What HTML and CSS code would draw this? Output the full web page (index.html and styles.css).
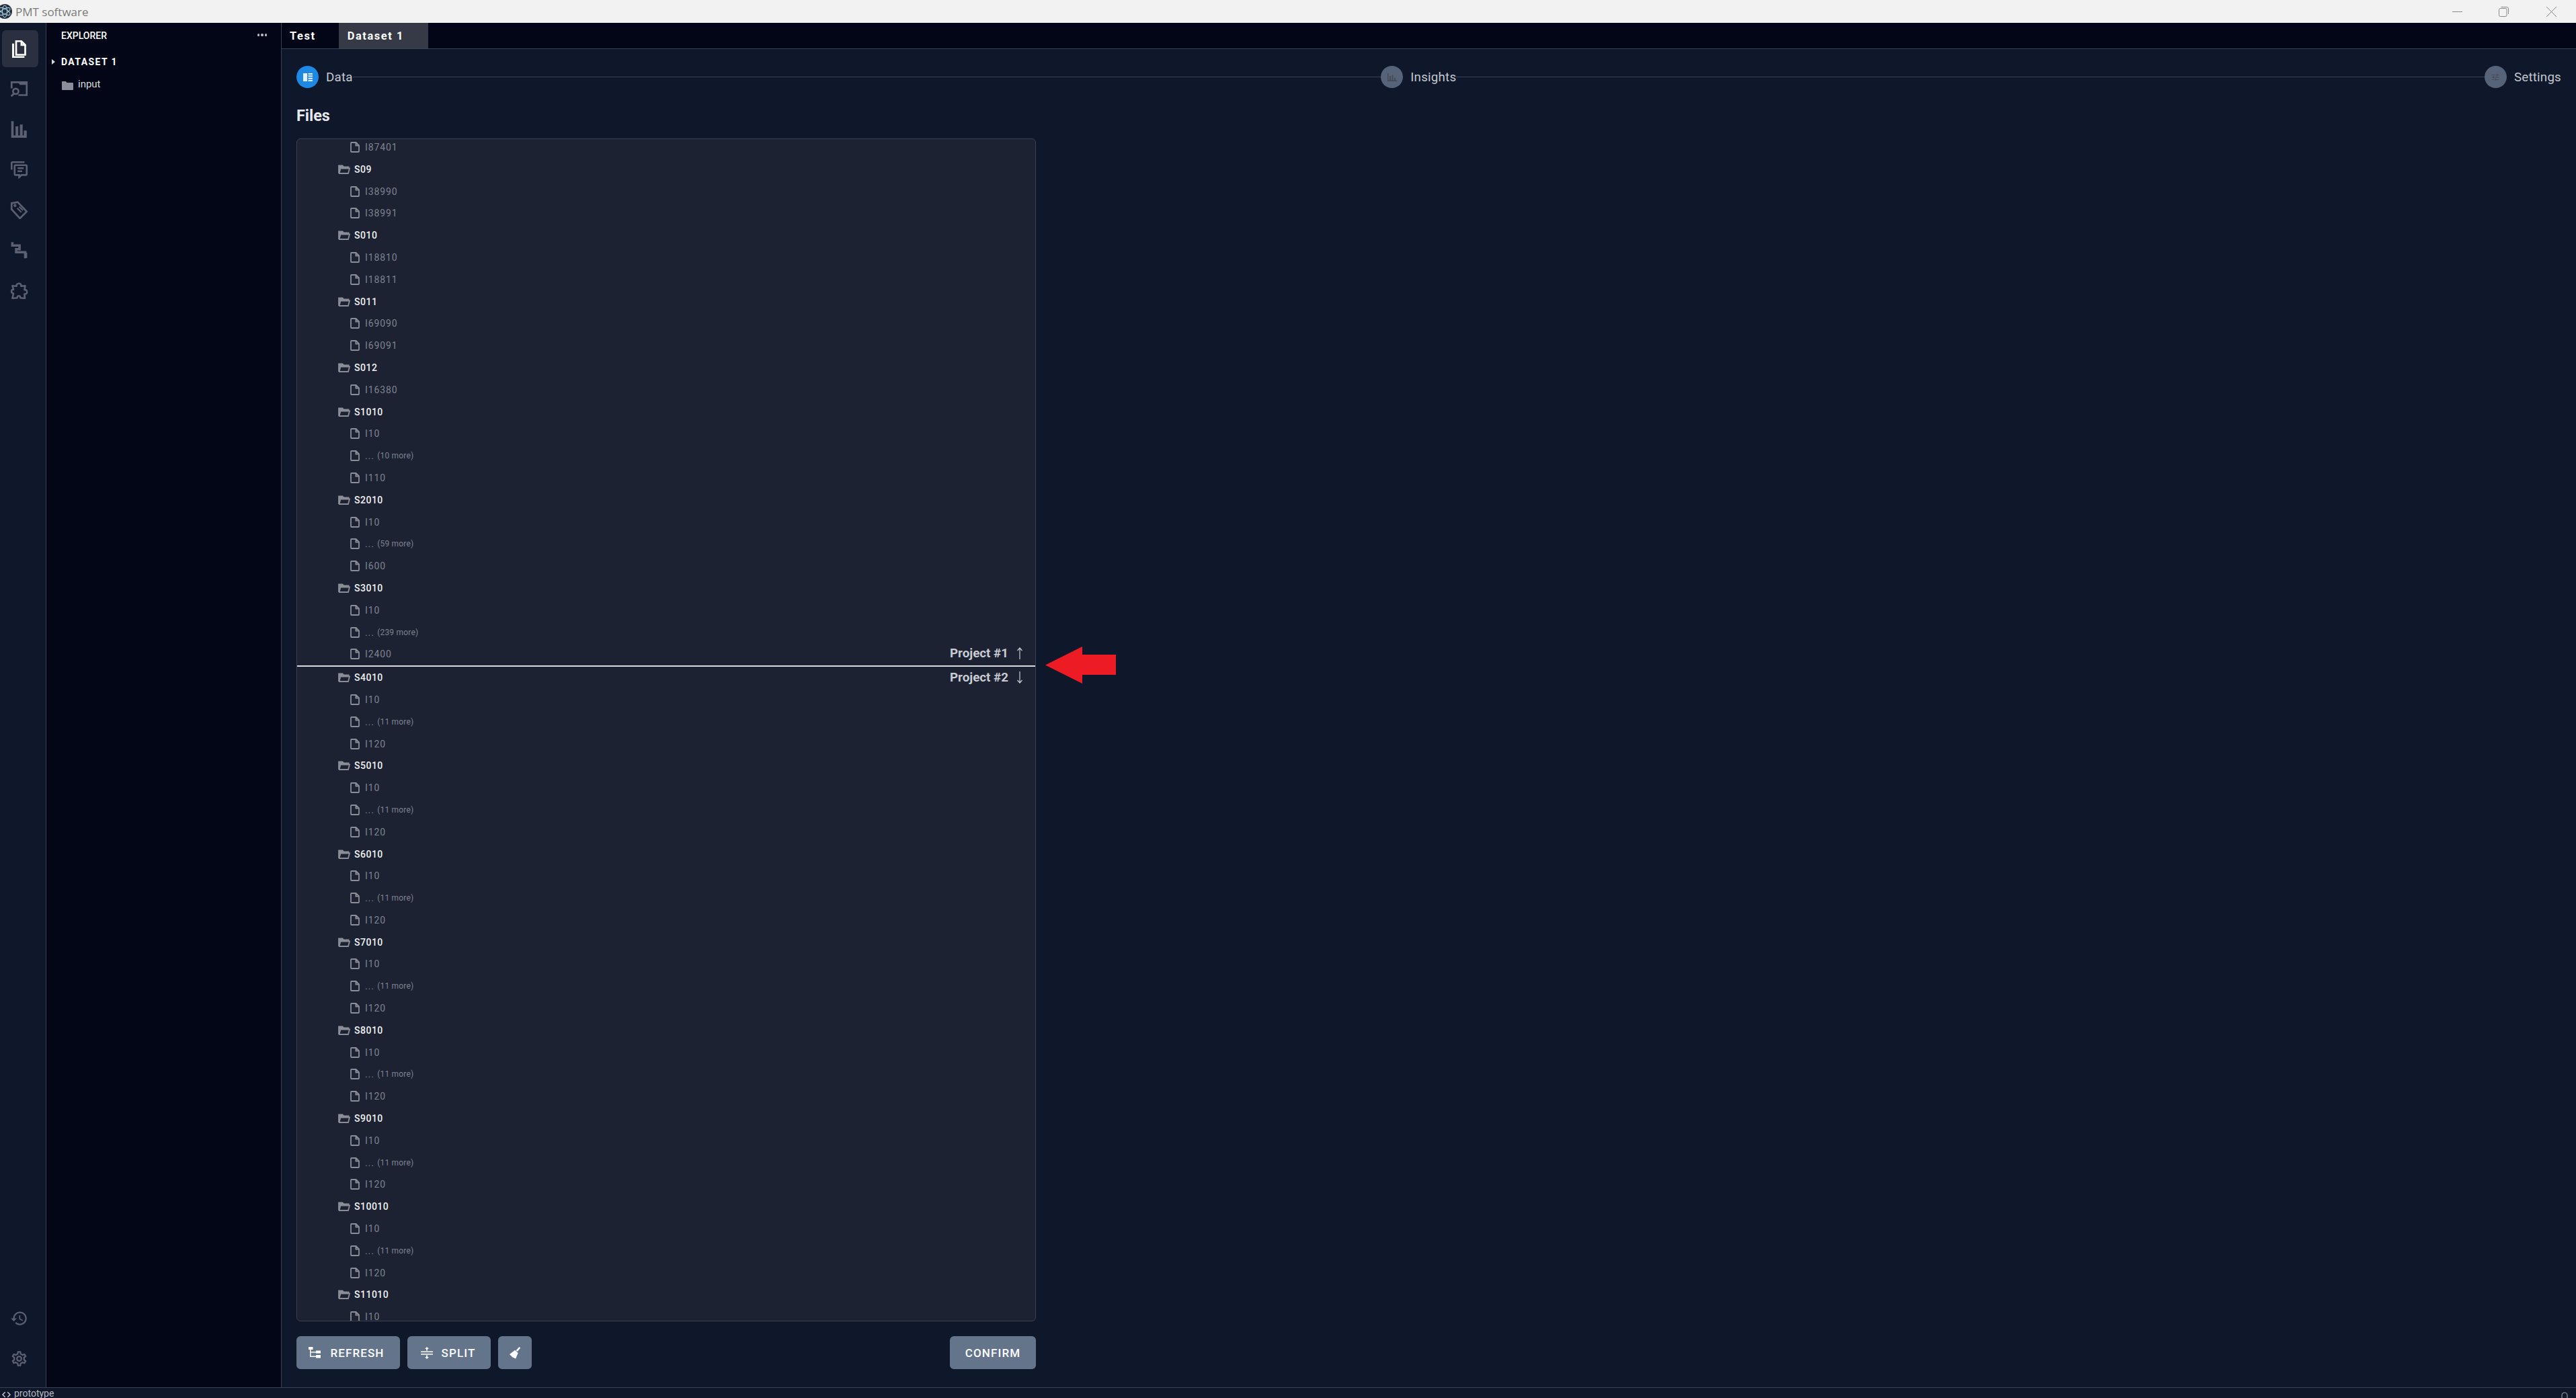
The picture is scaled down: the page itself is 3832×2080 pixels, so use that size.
FILE: index.html
```html
<!DOCTYPE html>
<html lang="en">
<head>
    <meta charset="UTF-8">
    <meta name="viewport" content="width=device-width, initial-scale=1.0">
    <title>PMT software</title>
    <link rel="stylesheet" href="styles.css">
</head>
<body>
    <svg class="sprites" aria-hidden="true">
        <symbol id="i-file" viewBox="0 0 14 16"><path d="M1 2a1 1 0 0 1 1-1h6.6L13 5.4V14a1 1 0 0 1-1 1H2a1 1 0 0 1-1-1z M8.4 1v4.6H13" fill="none" stroke="currentColor" stroke-width="1.8"/></symbol>
        <symbol id="i-folder" viewBox="0 0 18 14"><path d="M1 13V1.5h5.5l1.6 1.8h7.4v2M1 13h14l2-7.5H3.5L1.5 13" fill="none" stroke="currentColor" stroke-width="1.8"/><path d="M1 1h5.5l1.6 2H15v2H3L1 11z" fill="currentColor"/></symbol>
    </svg>

    <div class="titlebar">
        <svg class="app-logo" viewBox="0 0 22 22"><circle cx="11" cy="11" r="11" fill="#2b3040"/><g fill="none" stroke="#9fd8e8" stroke-width="1"><ellipse cx="11" cy="11" rx="9" ry="3.6" transform="rotate(30 11 11)"/><ellipse cx="11" cy="11" rx="9" ry="3.6" transform="rotate(90 11 11)"/><ellipse cx="11" cy="11" rx="9" ry="3.6" transform="rotate(150 11 11)"/></g></svg>
        <span class="app-name">PMT software</span>
        <div class="win-controls">
            <svg viewBox="0 0 15 15"><path d="M0 7.5h15" stroke="#8a8a8a" stroke-width="1"/></svg>
            <svg viewBox="0 0 15 15"><rect x=".5" y="2.5" width="11.5" height="12" rx="2" fill="none" stroke="#8a8a8a"/><path d="M3.5 .5h8.5a2.5 2.5 0 0 1 2.5 2.5v8" fill="none" stroke="#8a8a8a"/></svg>
            <svg viewBox="0 0 15 15"><path d="M0 0l15 15M15 0L0 15" stroke="#8a8a8a" stroke-width="1"/></svg>
        </div>
    </div>

    <div class="workspace">
        <nav class="rail">
            <div class="rail-top">
                <div class="rail-item active">
                    <svg viewBox="0 0 24 24" fill="none" stroke="currentColor" stroke-width="2.4"><path d="M8 2h7l5 5v13H8z"/><path d="M15 2v5h5" /><path d="M4 5v18h15" stroke-width="2.6"/></svg>
                </div>
                <div class="rail-item">
                    <svg viewBox="0 0 24 24" fill="none" stroke="currentColor" stroke-width="2.4"><path d="M2 11V3h20v17H11"/><path d="M10 2.5h12v4H13z" fill="currentColor" stroke="none"/><circle cx="7.5" cy="15" r="3.6"/><path d="M5 18l-3.5 3.5"/></svg>
                </div>
                <div class="rail-item">
                    <svg viewBox="0 0 24 24" fill="currentColor"><path d="M1.5 1h3.2v19h2.5V8h3.6v12h2.2V5.5h3.6V20h1.6v-6.5H22V23H1.5z"/></svg>
                </div>
                <div class="rail-item">
                    <svg viewBox="0 0 24 24" fill="none" stroke="currentColor" stroke-width="2.3"><path d="M2 12V3a1 1 0 0 1 1-1h16"/><path d="M6 7a1 1 0 0 1 1-1h14a1 1 0 0 1 1 1v11a1 1 0 0 1-1 1h-6l-3 3v-3H7a1 1 0 0 1-1-1z"/><path d="M10 10h8M10 14h6"/></svg>
                </div>
                <div class="rail-item">
                    <svg viewBox="0 0 24 24" fill="none" stroke="currentColor" stroke-width="2.3"><path d="M2 3l8-1.5L22 14l-9 9L2 11z"/><path d="M9.5 9.5l5.5 5.5M12 7.5l5 5" stroke-width="1.8"/><circle cx="6.5" cy="6" r=".8"/></svg>
                </div>
                <div class="rail-item">
                    <svg viewBox="0 0 24 24" fill="none" stroke="currentColor" stroke-width="3.2"><path d="M3 1v4.5h9.5v5H8v4h12v8M21 15v7"/></svg>
                </div>
                <div class="rail-item">
                    <svg viewBox="0 0 24 24" fill="none" stroke="currentColor" stroke-width="2.3" stroke-linejoin="round"><path d="M8.500 6C7.500 1.500 15.500 1 14.500 6L20 5.500 19 10.800C23.500 10 23.500 17.500 19 16.500L19.500 22 13.500 21.500C14 18 9 18 9.500 21.500L3 22 4.500 15.500C1 16 1 9.500 4.500 10.500L3 5.500Z"/></svg>
                </div>
            </div>
            <div class="rail-bottom">
                <div class="rail-item">
                    <svg viewBox="0 0 24 24" fill="currentColor"><path d="M13 3c-4.970 0-9 4.030-9 9H1l3.890 3.890.07.14L9 12H6c0-3.870 3.130-7 7-7s7 3.130 7 7-3.130 7-7 7c-1.930 0-3.680-.79-4.940-2.060l-1.420 1.420C8.270 19.990 10.510 21 13 21c4.970 0 9-4.030 9-9s-4.030-9-9-9zm-1 5v5l4.280 2.540.72-1.210-3.500-2.080V8H12z"/></svg>
                </div>
                <div class="rail-item">
                    <svg viewBox="0 0 24 24" fill="currentColor"><path d="M19.430 12.980c.04-.32.07-.64.07-.98 0-.34-.03-.66-.07-.98l2.110-1.650c.19-.15.24-.42.12-.64l-2-3.460c-.09-.16-.26-.25-.44-.25-.06 0-.12.01-.17.03l-2.490 1c-.52-.4-1.080-.73-1.690-.98l-.38-2.650C14.460 2.180 14.250 2 14 2h-4c-.25 0-.46.18-.49.42l-.38 2.650c-.61.25-1.170.59-1.690.98l-2.490-1c-.06-.02-.12-.03-.18-.03-.17 0-.34.09-.43.25l-2 3.460c-.13.22-.07.49.12.64l2.110 1.650c-.04.32-.07.65-.07.98 0 .33.03.66.07.98l-2.110 1.650c-.19.15-.24.42-.12.64l2 3.460c.09.16.26.25.44.25.06 0 .12-.01.17-.03l2.490-1c.52.4 1.080.73 1.690.98l.38 2.650c.03.24.24.42.49.42h4c.25 0 .46-.18.49-.42l.38-2.650c.61-.25 1.170-.59 1.690-.98l2.490 1c.06.02.12.03.18.03.17 0 .34-.09.43-.25l2-3.460c.12-.22.07-.49-.12-.64l-2.110-1.650zm-1.980-1.710c.04.31.05.52.05.73 0 .21-.02.43-.05.73l-.14 1.130.89.7 1.080.84-.7 1.210-1.270-.51-1.040-.42-.9.68c-.43.32-.84.56-1.250.73l-1.060.43-.16 1.130-.2 1.350h-1.400l-.19-1.350-.16-1.130-1.060-.43c-.43-.18-.83-.41-1.230-.71l-.91-.7-1.060.43-1.270.51-.7-1.210 1.080-.84.89-.7-.14-1.130c-.03-.31-.05-.54-.05-.74s.02-.43.05-.73l.14-1.130-.89-.7-1.080-.84.7-1.210 1.270.51 1.040.42.9-.68c.43-.32.84-.56 1.250-.73l1.060-.43.16-1.130.2-1.350h1.390l.19 1.350.16 1.130 1.060.43c.43.18.83.41 1.230.71l.91.7 1.060-.43 1.270-.51.7 1.210-1.070.85-.89.7.14 1.130zM12 8c-2.210 0-4 1.790-4 4s1.790 4 4 4 4-1.790 4-4-1.790-4-4-4zm0 6c-1.100 0-2-.9-2-2s.9-2 2-2 2 .9 2 2-.9 2-2 2z"/></svg>
                </div>
            </div>
        </nav>

        <aside class="explorer">
            <div class="explorer-head">
                <span>EXPLORER</span>
                <span class="dots"><i></i><i></i><i></i></span>
            </div>
            <div class="dataset-name"><span class="caret"></span>DATASET 1</div>
            <div class="input-row">
                <svg viewBox="0 0 17 13"><path d="M0 1a1 1 0 0 1 1-1h5l1.500 2H16a1 1 0 0 1 1 1v9a1 1 0 0 1-1 1H1a1 1 0 0 1-1-1z" fill="#8b8e98"/></svg>
                input
            </div>
        </aside>

        <main class="main">
            <div class="tabs">
                <div class="tab">Test</div>
                <div class="tab active">Dataset 1</div>
            </div>
            <div class="content">
                <div class="steps">
                    <div class="step-dot current">
                        <svg viewBox="0 0 14 12" fill="#e6eef6"><path d="M0 0h6v12H0zM7.500 0H14v2H7.500zM7.500 3.300H14v2H7.500zM7.500 6.700H14v2H7.500zM7.500 10H14v2H7.500z"/></svg>
                    </div>
                    <span class="step-label">Data</span>
                    <div class="step-line"></div>
                    <div class="step-dot">
                        <svg viewBox="0 0 14 12" fill="#454a55"><path d="M0 0h1.500v10.500H3V4h2v6.500h1.500V2.500h2v8H10V6.500h2v4h2V12H0z"/></svg>
                    </div>
                    <span class="step-label">Insights</span>
                    <div class="step-line"></div>
                    <div class="step-dot">
                        <svg viewBox="0 0 24 24" fill="#454a55"><path d="M3 17v2h6v-2H3zM3 5v2h10V5H3zm10 16v-2h8v-2h-8v-2h-2v6h2zM7 9v2H3v2h4v2h2V9H7zm14 4v-2H11v2h10zm-6-4h2V7h4V5h-4V3h-2v6z"/></svg>
                    </div>
                    <span class="step-label">Settings</span>
                </div>

                <h2 class="files-title">Files</h2>

                <div class="files-wrap">
                    <div class="files-panel">
                        <div class="tree">
                            <div class="row file"><svg><use href="#i-file"/></svg>I87401</div>
                            <div class="row folder"><svg><use href="#i-folder"/></svg>S09</div>
                            <div class="row file"><svg><use href="#i-file"/></svg>I38990</div>
                            <div class="row file"><svg><use href="#i-file"/></svg>I38991</div>
                            <div class="row folder"><svg><use href="#i-folder"/></svg>S010</div>
                            <div class="row file"><svg><use href="#i-file"/></svg>I18810</div>
                            <div class="row file"><svg><use href="#i-file"/></svg>I18811</div>
                            <div class="row folder"><svg><use href="#i-folder"/></svg>S011</div>
                            <div class="row file"><svg><use href="#i-file"/></svg>I69090</div>
                            <div class="row file"><svg><use href="#i-file"/></svg>I69091</div>
                            <div class="row folder"><svg><use href="#i-folder"/></svg>S012</div>
                            <div class="row file"><svg><use href="#i-file"/></svg>I16380</div>
                            <div class="row folder"><svg><use href="#i-folder"/></svg>S1010</div>
                            <div class="row file"><svg><use href="#i-file"/></svg>I10</div>
                            <div class="row file"><svg><use href="#i-file"/></svg>... <span class="more">(10 more)</span></div>
                            <div class="row file"><svg><use href="#i-file"/></svg>I110</div>
                            <div class="row folder"><svg><use href="#i-folder"/></svg>S2010</div>
                            <div class="row file"><svg><use href="#i-file"/></svg>I10</div>
                            <div class="row file"><svg><use href="#i-file"/></svg>... <span class="more">(59 more)</span></div>
                            <div class="row file"><svg><use href="#i-file"/></svg>I600</div>
                            <div class="row folder"><svg><use href="#i-folder"/></svg>S3010</div>
                            <div class="row file"><svg><use href="#i-file"/></svg>I10</div>
                            <div class="row file"><svg><use href="#i-file"/></svg>... <span class="more">(239 more)</span></div>
                            <div class="row file"><svg><use href="#i-file"/></svg>I2400</div>
                            <div class="split-line">
                                <div class="split-label up">Project #1 <svg viewBox="0 0 10 18"><path d="M5 18V1M1.500 5L5 1l3.500 4" fill="none" stroke="currentColor" stroke-width="1.200"/></svg></div>
                                <div class="split-label down">Project #2 <svg viewBox="0 0 10 18"><path d="M5 0v17M1.500 13L5 17l3.500-4" fill="none" stroke="currentColor" stroke-width="1.200"/></svg></div>
                            </div>
                            <div class="row folder"><svg><use href="#i-folder"/></svg>S4010</div>
                            <div class="row file"><svg><use href="#i-file"/></svg>I10</div>
                            <div class="row file"><svg><use href="#i-file"/></svg>... <span class="more">(11 more)</span></div>
                            <div class="row file"><svg><use href="#i-file"/></svg>I120</div>
                            <div class="row folder"><svg><use href="#i-folder"/></svg>S5010</div>
                            <div class="row file"><svg><use href="#i-file"/></svg>I10</div>
                            <div class="row file"><svg><use href="#i-file"/></svg>... <span class="more">(11 more)</span></div>
                            <div class="row file"><svg><use href="#i-file"/></svg>I120</div>
                            <div class="row folder"><svg><use href="#i-folder"/></svg>S6010</div>
                            <div class="row file"><svg><use href="#i-file"/></svg>I10</div>
                            <div class="row file"><svg><use href="#i-file"/></svg>... <span class="more">(11 more)</span></div>
                            <div class="row file"><svg><use href="#i-file"/></svg>I120</div>
                            <div class="row folder"><svg><use href="#i-folder"/></svg>S7010</div>
                            <div class="row file"><svg><use href="#i-file"/></svg>I10</div>
                            <div class="row file"><svg><use href="#i-file"/></svg>... <span class="more">(11 more)</span></div>
                            <div class="row file"><svg><use href="#i-file"/></svg>I120</div>
                            <div class="row folder"><svg><use href="#i-folder"/></svg>S8010</div>
                            <div class="row file"><svg><use href="#i-file"/></svg>I10</div>
                            <div class="row file"><svg><use href="#i-file"/></svg>... <span class="more">(11 more)</span></div>
                            <div class="row file"><svg><use href="#i-file"/></svg>I120</div>
                            <div class="row folder"><svg><use href="#i-folder"/></svg>S9010</div>
                            <div class="row file"><svg><use href="#i-file"/></svg>I10</div>
                            <div class="row file"><svg><use href="#i-file"/></svg>... <span class="more">(11 more)</span></div>
                            <div class="row file"><svg><use href="#i-file"/></svg>I120</div>
                            <div class="row folder"><svg><use href="#i-folder"/></svg>S10010</div>
                            <div class="row file"><svg><use href="#i-file"/></svg>I10</div>
                            <div class="row file"><svg><use href="#i-file"/></svg>... <span class="more">(11 more)</span></div>
                            <div class="row file"><svg><use href="#i-file"/></svg>I120</div>
                            <div class="row folder"><svg><use href="#i-folder"/></svg>S11010</div>
                            <div class="row file"><svg><use href="#i-file"/></svg>I10</div>
                        </div>
                    </div>
                    <svg class="red-arrow" viewBox="0 0 105 55"><path d="M0 27.500L55 0v12h50v30H55v13z" fill="#ed1c24"/></svg>
                </div>

                <div class="toolbar">
                    <div class="toolbar-left">
                        <button class="btn btn-refresh">
                            <svg viewBox="0 0 18 17" fill="#fff"><path d="M0 0h6.500v4H0zM2 4h1.500v11H2zM2 7h9v1.500H2zM2 13.500h9V15H2zM11 5.500h7v4h-7zM11 12h7v4.500h-7z"/></svg>
                            REFRESH
                        </button>
                        <button class="btn btn-split">
                            <svg viewBox="0 0 18 18" fill="#fff"><path d="M0 6.500h18v1.600H0zM0 10h18v1.600H0zM9 0l3 3H10v2.500H8V3H6zM9 18l3-3H10v-2.500H8V15H6z"/></svg>
                            SPLIT
                        </button>
                        <button class="btn btn-icon">
                            <svg viewBox="0 0 16 17" fill="#fff"><path d="M13.500 0l1.800 1.500-4.500 5-1.800-1.500z"/><path d="M7.500 4.500l4.500 4-3.500 8L4 14.500 0 10.500z"/></svg>
                        </button>
                    </div>
                    <button class="btn btn-confirm">CONFIRM</button>
                </div>
            </div>
        </main>
    </div>

    <footer class="statusbar">
        <svg viewBox="0 0 14 10" fill="none" stroke="#c4c8d0" stroke-width="1.600"><path d="M5 1L1 5l4 4M9 1l4 4-4 4"/></svg>
        <span>prototype</span>
        <svg class="bell" viewBox="0 0 12 14" fill="none" stroke="#9298a4" stroke-width="1.200"><path d="M2 10V6a4 4 0 0 1 8 0v4l1 1H1z"/></svg>
    </footer>
</body>
</html>
```

FILE: styles.css
```css
body {
    font-family: Roboto, "Liberation Sans", sans-serif;
    background-color: #0f172a;
    color: #fff;
    margin: 0;
    height: 100vh;
    display: flex;
    flex-direction: column;
    overflow: hidden;
}
.sprites {
    display: none;
}

/* window title bar */
.titlebar {
    height: 34px;
    flex: none;
    background-color: #f2f2f2;
    display: flex;
    align-items: center;
}
.app-logo {
    width: 22px;
    height: 22px;
    margin-left: -4px;
}
.app-name {
    margin-left: 5px;
    font-family: "Open Sans", sans-serif;
    font-size: 17px;
    color: #7a7a7a;
}
.win-controls {
    margin-left: auto;
    margin-right: 29px;
    display: flex;
    gap: 56px;
}
.win-controls svg {
    width: 15px;
    height: 15px;
    display: block;
}
.win-controls svg:first-child {
    margin-right: -2px;
}

.workspace {
    flex: 1;
    display: flex;
    min-height: 0;
}

/* icon rail */
.rail {
    width: 68px;
    flex: none;
    border-right: 1px solid #3b4150;
    display: flex;
    flex-direction: column;
    justify-content: space-between;
    padding: 11px 0 15px;
}
.rail-top,
.rail-bottom {
    display: flex;
    flex-direction: column;
    gap: 5px;
}
.rail-item {
    width: 54px;
    height: 55px;
    margin-left: 3px;
    box-sizing: border-box;
    padding-right: 3px;
    border-radius: 6px;
    display: flex;
    align-items: center;
    justify-content: center;
    color: #5b6170;
}
.rail-item svg {
    width: 27px;
    height: 27px;
}
.rail-item.active {
    background-color: #2a3040;
    color: #fff;
}

/* explorer */
.explorer {
    width: 349px;
    flex: none;
    background-color: #020617;
    border-right: 1px solid #3b4150;
    font-size: 14px;
}
.explorer-head {
    height: 38px;
    padding: 0 21px 0 22px;
    display: flex;
    align-items: center;
    justify-content: space-between;
    font-weight: 500;
}
.dots {
    display: flex;
    gap: 2px;
    margin-bottom: 2px;
}
.dots i {
    width: 3.500px;
    height: 3.500px;
    border-radius: 50%;
    background-color: #b9bcc4;
}
.dataset-name {
    margin-top: 9px;
    height: 22px;
    padding-left: 8px;
    display: flex;
    align-items: center;
    font-weight: 700;
    letter-spacing: 1.4px;
}
.caret {
    width: 0;
    height: 0;
    border-left: 5px solid #d5d7dc;
    border-top: 4.500px solid transparent;
    border-bottom: 4.500px solid transparent;
    margin-right: 9px;
}
.input-row {
    margin-top: 13px;
    padding-left: 23px;
    display: flex;
    align-items: center;
    gap: 7px;
    color: #d8dade;
    font-size: 15px;
}
.input-row svg {
    width: 17px;
    height: 13px;
    margin-top: 4px;
}

/* main area */
.main {
    flex: 1;
    min-width: 0;
    display: flex;
    flex-direction: column;
}
.tabs {
    height: 38px;
    flex: none;
    background-color: #020617;
    border-bottom: 1px solid #3b4150;
    display: flex;
}
.tab {
    padding: 0 34px 0 12px;
    display: flex;
    align-items: center;
    font-size: 16.400px;
    font-weight: 700;
    letter-spacing: 1.600px;
}
.tab.active {
    background-color: #363a47;
    padding: 0 36px 0 13px;
}
.content {
    flex: 1;
    min-height: 0;
    display: flex;
    flex-direction: column;
    padding: 25px 22px 27px;
}
.steps {
    height: 33px;
    flex: none;
    display: flex;
    align-items: center;
}
.step-dot {
    width: 33px;
    height: 33px;
    flex: none;
    border-radius: 50%;
    background-color: #566378;
    display: flex;
    align-items: center;
    justify-content: center;
}
.step-dot svg {
    width: 14px;
    height: 14px;
}
.step-dot.current {
    background-color: #1e88e5;
}
.step-label {
    margin-left: 11px;
    font-size: 18.750px;
    letter-spacing: .2px;
    color: #c4c7ce;
}
.step-line {
    flex: 1;
    height: 1px;
    background-color: #3b4150;
}
.files-title {
    margin: 18px 0 0;
    height: 57px;
    font-size: 23.400px;
    font-weight: 700;
    line-height: 46px;
    color: #e8e9ec;
    flex: none;
}
.files-wrap {
    position: relative;
    width: 1100px;
    flex: 1;
    min-height: 0;
}
.files-panel {
    height: 100%;
    box-sizing: border-box;
    background-color: #1c2232;
    border: 1px solid #3b4150;
    border-radius: 6px;
    overflow: hidden;
}
.tree {
    margin-top: -4.400px;
}
.row {
    height: 32.800px;
    display: flex;
    align-items: center;
    white-space: pre;
}
.row svg {
    flex: none;
}
.row.folder {
    padding-left: 61px;
    font-size: 14px;
    font-weight: 500;
    letter-spacing: .5px;
    color: #f0f1f3;
}
.row.folder svg {
    width: 18px;
    height: 14px;
    margin-right: 6px;
    color: #8b8e98;
}
.row.file {
    padding-left: 79px;
    font-size: 14px;
    letter-spacing: .9px;
    color: #7f8390;
}
.row.file svg {
    width: 14px;
    height: 16px;
    margin-right: 8px;
    color: #8b8e98;
}
.more {
    font-size: 12px;
    letter-spacing: .2px;
}
.split-line {
    position: relative;
    height: 2px;
    background-color: #d9dade;
}
.split-label {
    position: absolute;
    left: 971px;
    display: flex;
    align-items: center;
    font-size: 18.750px;
    font-weight: 700;
    color: #c9ccd2;
    white-space: pre;
}
.split-label svg {
    position: absolute;
    left: 99px;
    width: 10px;
    height: 18px;
}
.split-label.up {
    bottom: 9px;
}
.split-label.down {
    top: 7px;
}
.red-arrow {
    position: absolute;
    left: 1114px;
    top: 756px;
    width: 105px;
    height: 55px;
}

/* buttons */
.toolbar {
    width: 1100px;
    flex: none;
    margin-top: 22px;
    display: flex;
    justify-content: space-between;
}
.toolbar-left {
    display: flex;
    gap: 11px;
}
.btn {
    height: 49px;
    border: none;
    border-radius: 6px;
    background-color: #64748b;
    color: #fff;
    font-family: Roboto, sans-serif;
    font-size: 17px;
    font-weight: 500;
    letter-spacing: 1.100px;
    display: flex;
    align-items: center;
    justify-content: center;
    padding: 0;
}
.btn-refresh {
    width: 154px;
    gap: 14px;
    padding-right: 5px;
}
.btn-refresh svg {
    width: 18px;
    height: 17px;
}
.btn-split {
    width: 124px;
    gap: 13px;
    padding-right: 3px;
}
.btn-split svg {
    width: 18px;
    height: 18px;
}
.btn-icon {
    width: 50px;
}
.btn-icon svg {
    width: 17px;
    height: 18px;
}
.btn-confirm {
    width: 128px;
}

/* status bar */
.statusbar {
    height: 16px;
    flex: none;
    box-sizing: border-box;
    border-top: 1px solid #3b4150;
    display: flex;
    align-items: flex-start;
    padding-left: 3px;
    overflow: hidden;
    font-size: 14px;
    line-height: 18px;
    color: #b4b8c2;
}
.statusbar svg {
    width: 13px;
    height: 10px;
    margin-top: 5px;
}
.statusbar span {
    margin-left: 5px;
    margin-top: -1px;
}
.statusbar .bell {
    margin-left: auto;
    margin-right: 11px;
    width: 12px;
    height: 14px;
}
```
